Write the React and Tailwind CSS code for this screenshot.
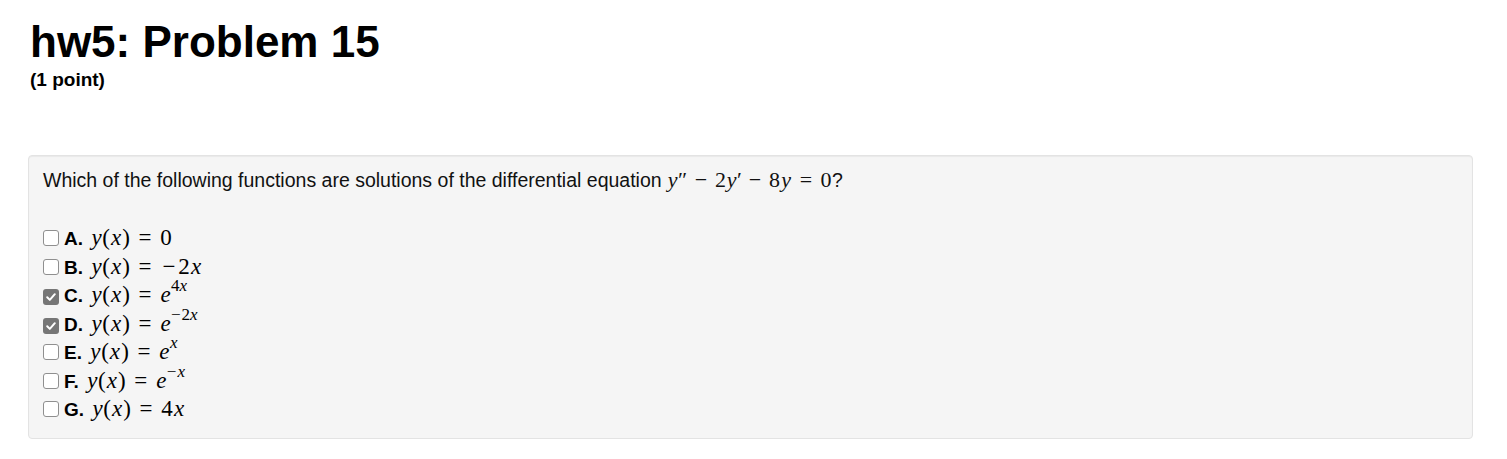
import React from 'react';

// single glyph of math, fixed box so spacing follows the MathJax look
const G = ({ c, w, it = true }) => (
    <span className={`inline-block text-center whitespace-nowrap ${it ? 'italic' : 'not-italic'} ${w}`}>{c}</span>
);

// raised with a relative offset so the row's line box is not stretched
const Sup = ({ children }) => (
    <span className="relative -top-[11px] text-[17px] leading-none whitespace-nowrap">{children}</span>
);

const Box = ({ checked }) =>
    checked ? (
        <span className="inline-flex items-center justify-center w-[16px] h-[16px] rounded-[3px] bg-[#767676] align-[-1px]">
            <svg className="w-[12px] h-[12px]" viewBox="0 0 12 12" fill="none">
                <path d="M2.2 6.3 L4.8 8.9 L9.8 3.2" stroke="white" strokeWidth="2" strokeLinecap="round" strokeLinejoin="round" />
            </svg>
        </span>
    ) : (
        <span className="inline-block w-[16px] h-[16px] rounded-[3px] border border-[#8f8f8f] bg-white align-[-1px]" />
    );

const Lhs = () => (
    <>
        <G c="y" w="w-[11px]" />
        <G c="(" w="w-[8px]" it={false} />
        <G c="x" w="w-[12px]" />
        <G c=")" w="w-[8px]" it={false} />
        <G c="=" w="w-[30px]" it={false} />
    </>
);

const options = [
    {
        key: 'A',
        checked: false,
        rhs: <G c="0" w="w-[12px]" it={false} />,
    },
    {
        key: 'B',
        checked: false,
        rhs: (
            <>
                <G c="−" w="w-[18px]" it={false} />
                <G c="2" w="w-[12px]" it={false} />
                <G c="x" w="w-[12px]" />
            </>
        ),
    },
    {
        key: 'C',
        checked: true,
        rhs: (
            <>
                <G c="e" w="w-[11px]" />
                <Sup>
                    <span className="not-italic">4</span>
                    <span className="italic">x</span>
                </Sup>
            </>
        ),
    },
    {
        key: 'D',
        checked: true,
        rhs: (
            <>
                <G c="e" w="w-[11px]" />
                <Sup>
                    <span className="not-italic mr-[1px]">−</span>
                    <span className="not-italic">2</span>
                    <span className="italic">x</span>
                </Sup>
            </>
        ),
    },
    {
        key: 'E',
        checked: false,
        rhs: (
            <>
                <G c="e" w="w-[11px]" />
                <Sup>
                    <span className="italic">x</span>
                </Sup>
            </>
        ),
    },
    {
        key: 'F',
        checked: false,
        rhs: (
            <>
                <G c="e" w="w-[11px]" />
                <Sup>
                    <span className="not-italic mr-[1px]">−</span>
                    <span className="italic">x</span>
                </Sup>
            </>
        ),
    },
    {
        key: 'G',
        checked: false,
        rhs: (
            <>
                <G c="4" w="w-[12px]" it={false} />
                <G c="x" w="w-[12px]" />
            </>
        ),
    },
];

export default function App() {
    return (
        <div className="min-h-[459px] bg-white pl-[28px] pr-[34px] pt-[18px] text-black font-['Liberation_Sans',Arial,sans-serif]">
            {/* Heading */}
            <h2 className="ml-[2px] text-[44px] leading-[48px] font-bold">hw5: Problem 15</h2>
            <div className="ml-[2px] mt-[3px] text-[19px] leading-[22px] font-bold">(1 point)</div>

            {/* Problem box */}
            <div className="mt-[64px] bg-[#f5f5f5] border border-[#e3e3e3] rounded-[4px] pl-[14px] pr-4 pt-[13px] pb-[14px] shadow-[inset_0_1px_1px_rgba(0,0,0,0.05)]">
                <p className="text-[19.5px] leading-[22px] text-[#111] whitespace-nowrap">
                    Which of the following functions are solutions of the differential equation{' '}
                    <span className="font-['Liberation_Serif','Times_New_Roman',serif] text-[22px] leading-[22px]">
                        <G c="y" w="w-[11px]" />
                        <G c="″" w="w-[9px]" it={false} />
                        <G c="−" w="w-[28px]" it={false} />
                        <G c="2" w="w-[11px]" it={false} />
                        <G c="y" w="w-[11px]" />
                        <G c="′" w="w-[4px]" it={false} />
                        <G c="−" w="w-[28px]" it={false} />
                        <G c="8" w="w-[11px]" it={false} />
                        <G c="y" w="w-[12px]" />
                        <G c="=" w="w-[28px]" it={false} />
                        <G c="0" w="w-[12px]" it={false} />
                    </span>
                    ?
                </p>

                <div className="mt-[33px]">
                    {options.map((o) => (
                        <div key={o.key} className="h-[28.5px] leading-[28.5px] text-[19px] whitespace-nowrap">
                            <Box checked={o.checked} />
                            <span className="ml-[5px] font-bold">{o.key}.</span>
                            <span className="ml-[8px] font-['Liberation_Serif','Times_New_Roman',serif] text-[23px] leading-[28.5px]">
                                <Lhs />
                                {o.rhs}
                            </span>
                        </div>
                    ))}
                </div>
            </div>
        </div>
    );
}
